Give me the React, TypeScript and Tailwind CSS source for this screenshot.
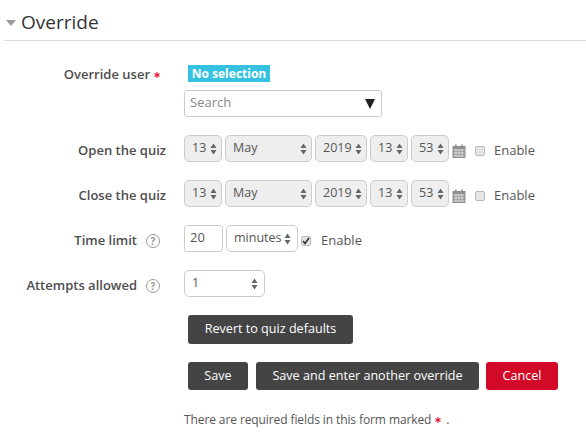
const font = { fontFamily: '"Open Sans", sans-serif' };

function Arrows() {
  return (
    <svg width="7" height="12" viewBox="0 0 7 12" className="shrink-0 text-[#666]">
      <path d="M3.5 0.5 L6.5 5 L0.5 5 Z M0.5 7 L6.5 7 L3.5 11.5 Z" fill="currentColor" />
    </svg>
  );
}

function Select({ value, width, white }: { value: string; width: string; white?: boolean }) {
  return (
    <div
      className={`flex h-[27px] items-center justify-between rounded-[5px] border border-[#ccc] pl-[7px] text-[12.5px] text-[#555] ${width} ${white ? "bg-white pr-[6px]" : "bg-[#eee] pr-[4px]"}`}
    >
      <span className="-mt-[1px]">{value}</span>
      <Arrows />
    </div>
  );
}

function Star() {
  return (
    <svg width="6" height="6" viewBox="0 0 7 7" className="shrink-0">
      <path d="M3.5 0v7M0.5 1.8l6 3.4M6.5 1.8l-6 3.4" stroke="#e3213d" strokeWidth="1.2" />
      <circle cx="3.5" cy="3.5" r="1.8" fill="#e3213d" />
    </svg>
  );
}

function Help() {
  return (
    <span className="flex h-[14px] w-[14px] items-center justify-center rounded-full border-[1.5px] border-[#999] text-[10px] font-bold leading-none text-[#999]">
      ?
    </span>
  );
}

function Check({ checked }: { checked?: boolean }) {
  return (
    <span className="flex h-[10px] w-[10px] items-center justify-center rounded-[2px] border border-[#bbb] bg-[#e4e4e4]">
      {checked && (
        <svg width="8" height="8" viewBox="0 0 8 8">
          <path d="M1 4 L3 6.5 L7 1" fill="none" stroke="#333" strokeWidth="1.6" />
        </svg>
      )}
    </span>
  );
}

function Calendar() {
  return (
    <svg width="14" height="15" viewBox="0 0 14 15" className="mt-[9px] shrink-0">
      <rect x="0.5" y="2" width="13" height="12" fill="#8f8f8f" />
      <rect x="3" y="0.5" width="1.6" height="3" fill="#8f8f8f" />
      <rect x="9.4" y="0.5" width="1.6" height="3" fill="#8f8f8f" />
      <path d="M1.5 6h11M1.5 9h11M1.5 12h11M4 5v8M7 5v8M10 5v8" stroke="#dcdcdc" strokeWidth="1" />
    </svg>
  );
}

function Label({ children }: { children: React.ReactNode }) {
  return (
    <div className="flex w-[166px] shrink-0 items-center justify-end gap-[9px] pt-[5px] text-[13px] font-semibold text-[#4d4d4d]">
      {children}
    </div>
  );
}

function DateRow({ label }: { label: string }) {
  return (
    <div className="mt-[18px] flex h-[27px] gap-[18px]">
      <Label>{label}</Label>
      <div className="flex gap-[3px]">
        <Select value="13" width="w-[38px]" />
        <Select value="May" width="w-[87px]" />
        <Select value="2019" width="w-[52px]" />
        <Select value="13" width="w-[38px]" />
        <Select value="53" width="w-[38px]" />
        <Calendar />
        <div className="ml-[6px] flex items-center gap-[9px] pt-[5px] text-[13px] text-[#555]">
          <Check />
          <span>Enable</span>
        </div>
      </div>
    </div>
  );
}

function Button({ children, width, red }: { children: React.ReactNode; width: string; red?: boolean }) {
  return (
    <div
      className={`flex h-full items-center justify-center rounded-[3px] text-[12.6px] font-medium text-white ${width} ${red ? "bg-[#d20a27]" : "bg-[#444]"}`}
    >
      {children}
    </div>
  );
}

export default function App() {
  return (
    <div style={font} className="h-[434px] w-[586px] overflow-hidden bg-white">
      <div className="ml-1 flex h-[41px] items-center border-b border-[#ddd] pt-[5px]">
        <span className="ml-[2px] h-0 w-0 border-x-[5.5px] border-t-[6px] border-x-transparent border-t-[#999]" />
        <h2 className="ml-[5px] text-[19px] leading-none text-[#333]">Override</h2>
      </div>

      <div className="mt-[24px] flex gap-[18px]">
        <div className="flex h-[20px] w-[166px] shrink-0 items-center justify-end pr-[6px] text-[13px] font-semibold text-[#4d4d4d]">
          <span>Override user</span>
          <span className="ml-[4px] flex"><Star /></span>
        </div>
        <div>
          <div className="ml-1 flex h-[17px] w-[82px] items-center justify-center bg-[#35c2e0] text-[12px] font-bold text-white">
            No selection
          </div>
          <div className="mt-2 flex h-[27px] w-[198px] items-center justify-between rounded-[3px] border border-[#ccc] pl-[5px] pr-[6px] text-[13px] text-[#888]">
            <span className="-mt-[2px]">Search</span>
            <span className="h-0 w-0 border-x-[5px] border-t-[10px] border-x-transparent border-t-[#222]" />
          </div>
        </div>
      </div>

      <DateRow label="Open the quiz" />
      <DateRow label="Close the quiz" />

      <div className="mt-[18px] flex h-[27px] gap-[18px]">
        <Label>
          <span>Time limit</span>
          <span className="mr-[6px]"><Help /></span>
        </Label>
        <div className="flex gap-[3px]">
          <div className="h-[27px] w-[39px] rounded-[3px] border border-[#ccc] pl-[5px] text-[13px] leading-[22px] text-[#555]">20</div>
          <Select value="minutes" width="w-[72px]" white />
          <div className="flex items-center gap-[10px] pt-[5px] text-[13px] text-[#555]">
            <Check checked />
            <span>Enable</span>
          </div>
        </div>
      </div>

      <div className="mt-[18px] flex h-[27px] gap-[18px]">
        <Label>
          <span>Attempts allowed</span>
          <span className="mr-[6px]"><Help /></span>
        </Label>
        <Select value="1" width="w-[81px]" white />
      </div>

      <div className="ml-[188px] mt-[18px] h-[29px]">
        <Button width="w-[165px]">Revert to quiz defaults</Button>
      </div>

      <div className="ml-[188px] mt-[18px] flex h-[28px]">
        <Button width="w-[60px]">Save</Button>
        <div className="ml-[8px] h-full">
          <Button width="w-[223px]">Save and enter another override</Button>
        </div>
        <div className="ml-[7px] h-full">
          <Button width="w-[72px]" red>Cancel</Button>
        </div>
      </div>

      <div className="ml-[184px] mt-[21px] flex items-center text-[12px] leading-[18px] text-[#555]">
        <span className="tracking-[-0.1px]">There are required fields in this form marked</span>
        <span className="ml-[4px] flex"><Star /></span>
        <span className="ml-[5px]">.</span>
      </div>
    </div>
  );
}
